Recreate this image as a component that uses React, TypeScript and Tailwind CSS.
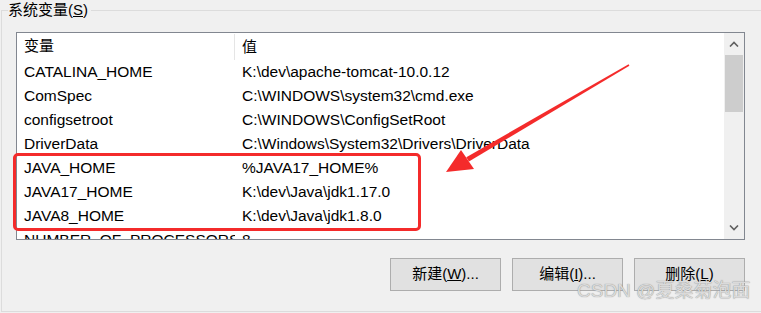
import React from 'react';

const font = { fontFamily: '"Liberation Sans", "Noto Sans CJK SC", sans-serif' };

const rows: [string, string][] = [
  ['CATALINA_HOME', 'K:\\dev\\apache-tomcat-10.0.12'],
  ['ComSpec', 'C:\\WINDOWS\\system32\\cmd.exe'],
  ['configsetroot', 'C:\\WINDOWS\\ConfigSetRoot'],
  ['DriverData', 'C:\\Windows\\System32\\Drivers\\DriverData'],
  ['JAVA_HOME', '%JAVA17_HOME%'],
  ['JAVA17_HOME', 'K:\\dev\\Java\\jdk1.17.0'],
  ['JAVA8_HOME', 'K:\\dev\\Java\\jdk1.8.0'],
  ['NUMBER_OF_PROCESSORS', '8'],
];

function Btn({ label, hot, tail }: { label: string; hot: string; tail: string }) {
  return (
    <button className="flex h-[33px] w-[111px] items-center justify-center border border-[#adadad] bg-[#e1e1e1] text-[15px] text-black">
      {label}(<span className="underline">{hot}</span>){tail}
    </button>
  );
}

export default function App() {
  return (
    <div className="relative h-[313px] w-[761px] overflow-hidden bg-[#f0f0f0]" style={font}>
      {/* group box */}
      <div className="absolute left-[1px] top-[10px] h-[302px] w-[780px] border border-[#dcdcdc]" />
      <div className="relative px-[8px] pt-[1px] text-[15px] leading-[18px] text-black">
        <span className="bg-[#f0f0f0] pr-[3px]">系统变量(<span className="underline">S</span>)</span>
      </div>

      <div className="relative ml-[16px] mt-[13px] flex h-[208px] w-[729px] border border-[#828790] bg-white">
        <div className="flex-1 overflow-hidden">
          <div className="flex h-[27px] items-center text-[15px] text-black">
            <div className="w-[217px] pl-[7px]">变量</div>
            <div className="h-[26px] border-l border-[#e5e5e5] pl-[7px] leading-[26px]">值</div>
          </div>
          {rows.map(([k, v]) => (
            <div key={k} className="flex h-[24px] items-center whitespace-nowrap text-[15.5px] text-black">
              <div className="w-[218px] shrink-0 overflow-hidden pl-[7px]">{k}</div>
              <div className="pl-[7px]">{v}</div>
            </div>
          ))}
        </div>
        <div className="flex w-[20px] flex-col bg-[#f0f0f0]">
          <div className="flex h-[22px] items-center justify-center">
            <svg width="10" height="6" viewBox="0 0 10 6"><path d="M1 5.5 L5 1.5 L9 5.5" stroke="#606060" strokeWidth="1.6" fill="none" /></svg>
          </div>
          <div className="mx-[1px] h-[57px] bg-[#cdcdcd]" />
          <div className="flex-1" />
          <div className="flex h-[22px] items-center justify-center">
            <svg width="10" height="6" viewBox="0 0 10 6"><path d="M1 0.5 L5 4.5 L9 0.5" stroke="#606060" strokeWidth="1.6" fill="none" /></svg>
          </div>
        </div>
      </div>

      <div className="relative ml-[390px] mt-[18px] flex gap-[11px]">
        <Btn label="新建" hot="W" tail="..." />
        <Btn label="编辑" hot="I" tail="..." />
        <Btn label="删除" hot="L" tail="" />
      </div>

      {/* annotation overlays */}
      <div className="absolute left-[13px] top-[153px] h-[78px] w-[408px] rounded-[5px] border-[3px] border-[#f42b2b]" />
      <svg className="absolute left-0 top-0" width="761" height="313">
        <polygon points="466.3,157.2 628.6,64.3 629.4,65.7 468.9,161.6" fill="#f42b2b" />
        <polygon points="446,172 461,150 474,169" fill="#f42b2b" />
      </svg>
      <div
        className="absolute left-[577px] top-[280px] text-[19px] leading-[22px] text-[#dadada]"
        style={{ textShadow: '0 0 1px rgba(80,80,80,0.7)' }}
      >
        CSDN @夏桑菊泡面
      </div>
    </div>
  );
}
